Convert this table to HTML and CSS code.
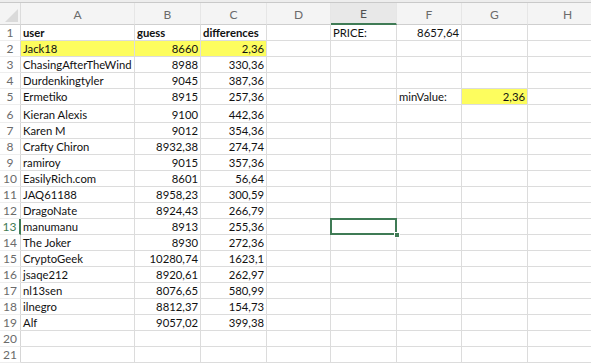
FILE: index.html
```html
<!DOCTYPE html>
<html>
<head>
<meta charset="utf-8">
<link rel="stylesheet" href="styles.css">
</head>
<body>
<div class="topstrip"></div>
<div class="sheet">
  <div class="corner"><span class="tri"></span></div>
  <div class="colh">A</div><div class="colh">B</div><div class="colh">C</div><div class="colh">D</div>
  <div class="colh sel">E</div><div class="colh">F</div><div class="colh">G</div><div class="colh last">H</div>

  <div class="rowh">1</div><div class="c b">user</div><div class="c b">guess</div><div class="c b">differences</div><div class="c"></div><div class="c">PRICE:</div><div class="c r">8657,64</div><div class="c"></div><div class="c"></div>
  <div class="rowh">2</div><div class="c y">Jack18</div><div class="c r y">8660</div><div class="c r y">2,36</div><div class="c"></div><div class="c"></div><div class="c"></div><div class="c"></div><div class="c"></div>
  <div class="rowh">3</div><div class="c">ChasingAfterTheWind</div><div class="c r">8988</div><div class="c r">330,36</div><div class="c"></div><div class="c"></div><div class="c"></div><div class="c"></div><div class="c"></div>
  <div class="rowh">4</div><div class="c">Durdenkingtyler</div><div class="c r">9045</div><div class="c r">387,36</div><div class="c"></div><div class="c"></div><div class="c"></div><div class="c"></div><div class="c"></div>
  <div class="rowh">5</div><div class="c">Ermetiko</div><div class="c r">8915</div><div class="c r">257,36</div><div class="c"></div><div class="c"></div><div class="c">minValue:</div><div class="c r y">2,36</div><div class="c"></div>
  <div class="rowh">6</div><div class="c">Kieran Alexis</div><div class="c r">9100</div><div class="c r">442,36</div><div class="c"></div><div class="c"></div><div class="c"></div><div class="c"></div><div class="c"></div>
  <div class="rowh">7</div><div class="c">Karen M</div><div class="c r">9012</div><div class="c r">354,36</div><div class="c"></div><div class="c"></div><div class="c"></div><div class="c"></div><div class="c"></div>
  <div class="rowh">8</div><div class="c">Crafty Chiron</div><div class="c r">8932,38</div><div class="c r">274,74</div><div class="c"></div><div class="c"></div><div class="c"></div><div class="c"></div><div class="c"></div>
  <div class="rowh">9</div><div class="c">ramiroy</div><div class="c r">9015</div><div class="c r">357,36</div><div class="c"></div><div class="c"></div><div class="c"></div><div class="c"></div><div class="c"></div>
  <div class="rowh">10</div><div class="c">EasilyRich.com</div><div class="c r">8601</div><div class="c r">56,64</div><div class="c"></div><div class="c"></div><div class="c"></div><div class="c"></div><div class="c"></div>
  <div class="rowh">11</div><div class="c">JAQ61188</div><div class="c r">8958,23</div><div class="c r">300,59</div><div class="c"></div><div class="c"></div><div class="c"></div><div class="c"></div><div class="c"></div>
  <div class="rowh">12</div><div class="c">DragoNate</div><div class="c r">8924,43</div><div class="c r">266,79</div><div class="c"></div><div class="c"></div><div class="c"></div><div class="c"></div><div class="c"></div>
  <div class="rowh selrow">13</div><div class="c">manumanu</div><div class="c r">8913</div><div class="c r">255,36</div><div class="c"></div><div class="c active"></div><div class="c"></div><div class="c"></div><div class="c"></div>
  <div class="rowh">14</div><div class="c">The Joker</div><div class="c r">8930</div><div class="c r">272,36</div><div class="c"></div><div class="c"></div><div class="c"></div><div class="c"></div><div class="c"></div>
  <div class="rowh">15</div><div class="c">CryptoGeek</div><div class="c r">10280,74</div><div class="c r">1623,1</div><div class="c"></div><div class="c"></div><div class="c"></div><div class="c"></div><div class="c"></div>
  <div class="rowh">16</div><div class="c">jsaqe212</div><div class="c r">8920,61</div><div class="c r">262,97</div><div class="c"></div><div class="c"></div><div class="c"></div><div class="c"></div><div class="c"></div>
  <div class="rowh">17</div><div class="c">nl13sen</div><div class="c r">8076,65</div><div class="c r">580,99</div><div class="c"></div><div class="c"></div><div class="c"></div><div class="c"></div><div class="c"></div>
  <div class="rowh">18</div><div class="c">ilnegro</div><div class="c r">8812,37</div><div class="c r">154,73</div><div class="c"></div><div class="c"></div><div class="c"></div><div class="c"></div><div class="c"></div>
  <div class="rowh">19</div><div class="c">Alf</div><div class="c r">9057,02</div><div class="c r">399,38</div><div class="c"></div><div class="c"></div><div class="c"></div><div class="c"></div><div class="c"></div>
  <div class="rowh">20</div><div class="c"></div><div class="c"></div><div class="c"></div><div class="c"></div><div class="c"></div><div class="c"></div><div class="c"></div><div class="c"></div>
  <div class="rowh">21</div><div class="c"></div><div class="c"></div><div class="c"></div><div class="c"></div><div class="c"></div><div class="c"></div><div class="c"></div><div class="c"></div>
</div>
</body>
</html>
```
FILE: styles.css
```css
html, body {
  margin: 0;
  padding: 0;
  background: #ffffff;
  overflow: hidden;
}
body {
  width: 591px;
  height: 364px;
  font-family: Lato, "Open Sans", sans-serif;
  font-size: 11.3px;
  color: #111;
}
.topstrip {
  height: 2px;
  background: #ededed;
  border-bottom: 1px solid #c9c9c9;
}
.sheet {
  display: grid;
  grid-template-columns: 21px 114px 66px 66px 64px 66px 65px 66px 80px;
  grid-template-rows: 22px repeat(5, 16px) 18px repeat(15, 16px);
}
.sheet > div {
  box-sizing: border-box;
  border-right: 1px solid #dcdcdc;
  border-bottom: 1px solid #dcdcdc;
  white-space: nowrap;
  overflow: hidden;
}
.corner {
  background: #f4f4f4;
  border-bottom-color: #cfcfcf !important;
  position: relative;
}
.tri {
  position: absolute;
  right: 2px;
  bottom: 2px;
  width: 0;
  height: 0;
  border-left: 13px solid transparent;
  border-bottom: 13px solid #dadada;
}
.colh {
  background: #f4f4f4;
  color: #6b6b6b;
  font-size: 12px;
  display: flex;
  align-items: center;
  justify-content: center;
  border-right-color: #e6e6e6 !important;
  border-bottom-color: #cfcfcf !important;
  padding-top: 1px;
}
.colh.sel {
  background: #e8e8e8;
  color: #4f4f4f;
  border-bottom: 2px solid #3f7b55 !important;
}
.rowh {
  background: #ffffff;
  color: #6b6b6b;
  display: flex;
  align-items: flex-end;
  justify-content: center;
  font-size: 12px;
  line-height: 15px;
  border-right-color: #d6d6d6 !important;
  border-bottom-color: #eeeeee !important;
}
.rowh.selrow {
  color: #3f7b55;
  border-right: 2px solid #3f7b55 !important;
}
.c {
  display: flex;
  align-items: flex-end;
  padding: 0 2px;
  line-height: 15px;
}
.c.r {
  justify-content: flex-end;
}
.c.b {
  font-weight: 700;
}
.c.y {
  background: #fdfd5e;
}
.c.active {
  position: relative;
  overflow: visible !important;
}
.c.active::after {
  content: "";
  position: absolute;
  left: -1px;
  top: -1px;
  right: -1px;
  bottom: -1px;
  border: 2px solid #3f7b55;
}
.c.active::before {
  content: "";
  position: absolute;
  right: -4px;
  bottom: -4px;
  width: 6px;
  height: 6px;
  background: #3f7b55;
  border: 1px solid #fff;
  box-sizing: border-box;
  z-index: 2;
}
```
